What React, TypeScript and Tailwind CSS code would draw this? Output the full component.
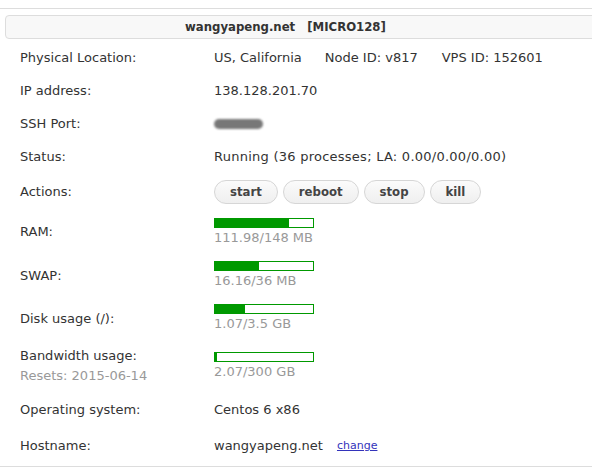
import React from "react";

const font = { fontFamily: '"DejaVu Sans", Verdana, sans-serif' };
const condensed = { fontFamily: '"DejaVu Sans Condensed", "DejaVu Sans", Tahoma, sans-serif' };

const usage = [
    { label: "RAM", used: 111.98, total: 148, unit: "MB", h: "h-[44px]" },
    { label: "SWAP", used: 16.16, total: 36, unit: "MB", h: "h-[43px]" },
    { label: "Disk usage (/)", used: 1.07, total: 3.5, unit: "GB", h: "h-[43px]" },
];

function Bar({ used, total, unit }: { used: number; total: number; unit: string }) {
    const pct = Math.max(2, (used / total) * 100);
    return (
        <div className="flex flex-col">
            <div className="w-[100px] h-[10px] border border-[#009900] bg-white">
                <div className="h-full bg-[#009900]" style={{ width: `${pct}%` }} />
            </div>
            <div className="text-[13px] leading-[18px] text-[#999999] mt-[1px]">
                {used}/{total} {unit}
            </div>
        </div>
    );
}

function Row({ label, h = "h-[33px]", children }: { label: React.ReactNode; h?: string; children: React.ReactNode }) {
    return (
        <div className={`flex items-center ${h}`}>
            <div className="w-[214px] pl-[20px] shrink-0">{label}</div>
            <div className="flex-1 flex items-center">{children}</div>
        </div>
    );
}

export default function App() {
    const actions = ["start", "reboot", "stop", "kill"];
    return (
        <div className="w-[592px] h-[472px] bg-white overflow-hidden text-[13px] text-[#333333]" style={font}>
            <div className="mt-[8px] border-t border-[#dddddd] pt-[6px] h-[459px] border-b">
                <div
                    className="ml-[5px] -mr-4 h-[24px] rounded-[4px] border border-[#dddddd] bg-[#f8f8f8] flex items-center pl-[179px] font-bold text-[13px] text-[#333333]"
                    style={condensed}
                >
                    <span>wangyapeng.net</span>
                    <span className="ml-[12px]">[MICRO128]</span>
                </div>

                <div className="mt-[2px]">
                    <Row label="Physical Location:">
                        <span>US, California</span>
                        <span className="ml-[23px]">Node ID: v817</span>
                        <span className="ml-[24px]">VPS ID: 152601</span>
                    </Row>
                    <Row label="IP address:">138.128.201.70</Row>
                    <Row label="SSH Port:">
                        <div className="w-[49px] h-[10px] rounded-full bg-[#777777] blur-[1px]" />
                    </Row>
                    <Row label="Status:">
                        <span className="tracking-[0.25px]">Running (36 processes; LA: 0.00/0.00/0.00)</span>
                    </Row>
                    <Row label="Actions:" h="h-[37px]">
                        <div className="flex gap-[5px]" style={condensed}>
                            {actions.map((a) => (
                                <button
                                    key={a}
                                    className="h-[24px] px-[15px] rounded-full border border-[#d6d6d6] bg-gradient-to-b from-[#fbfbfb] to-[#efefef] font-bold text-[13px] text-[#444444]"
                                >
                                    {a}
                                </button>
                            ))}
                        </div>
                    </Row>
                    {usage.map((u) => (
                        <Row key={u.label} label={`${u.label}:`} h={u.h}>
                            <Bar used={u.used} total={u.total} unit={u.unit} />
                        </Row>
                    ))}
                    <Row
                        h="h-[52px]"
                        label={
                            <div className="flex flex-col leading-[20px]">
                                <span>Bandwidth usage:</span>
                                <span className="text-[#999999]">Resets: 2015-06-14</span>
                            </div>
                        }
                    >
                        <Bar used={2.07} total={300} unit="GB" />
                    </Row>
                    <Row label="Operating system:" h="h-[36px]">Centos 6 x86</Row>
                    <Row label="Hostname:" h="h-[36px]">
                        <span>wangyapeng.net</span>
                        <a href="#" className="ml-[14px] text-[11px] text-[#3333bb] underline">change</a>
                    </Row>
                </div>
            </div>
        </div>
    );
}
